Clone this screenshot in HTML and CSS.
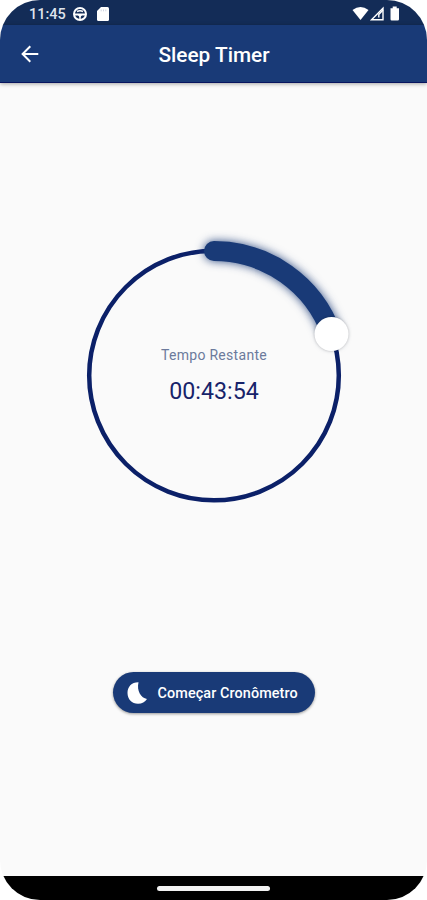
FILE: index.html
```
<!DOCTYPE html>
<html lang="pt">
<head>
  <meta charset="UTF-8">
  <meta name="viewport" content="width=device-width, initial-scale=1.0">
  <title>Sleep Timer</title>
  <link rel="stylesheet" href="styles.css">
</head>
<body>

  <div class="phone">
    <div class="status-bar">
      <span class="clock">11:45</span>
      <svg class="icon-app" width="16" height="16" viewBox="0 0 16 16">
        <circle cx="8" cy="8" r="6" fill="none" stroke="#fff" stroke-width="2"/>
        <path d="M2 8.500h12" stroke="#fff" stroke-width="1.800"/>
        <path d="M5 5.500q3-1.600 6 0M8 9v4.500" fill="none" stroke="#fff" stroke-width="1.500"/>
        <path d="M5 8h6l-3 3.500z" fill="#fff"/>
      </svg>
      <svg class="icon-sd" width="12" height="14" viewBox="0 0 12 14">
        <path d="M4 0h6.500Q12 0 12 1.500v11Q12 14 10.500 14h-9Q0 14 0 12.500V4z" fill="#fff"/>
        <path d="M4.200 2.500v1.800M6.500 2.500v1.800M8.800 2.500v1.800" stroke="#c5ccda" stroke-width=".8"/>
      </svg>
      <svg class="icon-signal" width="50" height="16" viewBox="0 0 50 16">
        <path d="M.5 4Q8.500-2 16.500 4L8.500 14z" fill="#fff"/>
        <path d="M19.500 13.800H31V2.200z" fill="none" stroke="#fff" stroke-width="1.400"/>
        <path d="M26.800 11.500V8.500L31 4" fill="none" stroke="#fff" stroke-width="1.400"/>
        <path d="M38.500 2.200h2.200V.5h4v1.700H47v11q0 1.300-1.300 1.300h-6q-1.200 0-1.200-1.300z" fill="#fff"/>
      </svg>
    </div>

    <header class="app-bar">
      <button class="back" type="button" aria-label="Voltar">
        <svg width="18" height="18" viewBox="0 0 18 18">
          <path d="M17.300 9H2M9.300 1.300L1.600 9l7.700 7.700" fill="none" stroke="#fff" stroke-width="2"/>
        </svg>
      </button>
      <h1>Sleep Timer</h1>
    </header>

    <main>
      <div class="timer">
        <svg class="dial" width="300" height="300" viewBox="0 0 300 300">
          <circle class="track" cx="150" cy="149.500" r="124.800"/>
          <path class="progress" d="M150 25A124.500 124.500 0 0 1 267.500 108"/>
          <circle class="knob" cx="267.500" cy="108" r="17"/>
        </svg>
        <div class="readout">
          <span class="label">Tempo Restante</span>
          <span class="time">00:43:54</span>
        </div>
      </div>

      <button class="start" type="button">
        <svg width="21" height="22" viewBox="0 0 21 22">
          <path d="M11.500.3C4.500.2.500 5 .5 11c0 6.300 4.500 10.700 10.500 10.700 4 0 7-1.600 9-4.700C14 16 9.500 9 11.500.3z" fill="#fff"/>
        </svg>
        <span>Começar Cronômetro</span>
      </button>
    </main>

    <div class="nav-bar">
      <div class="handle"></div>
    </div>
  </div>

</body>
</html>
```

FILE: styles.css
```
body {
  font-family: Roboto, sans-serif;
  background-color: #fff;
  margin: 0;
}

.phone {
  width: 427px;
  height: 900px;
  border-radius: 40px;
  overflow: hidden;
  display: flex;
  flex-direction: column;
  background-color: #fafafa;
}

.status-bar {
  height: 25px;
  box-sizing: border-box;
  padding: 3px 25px 0 29px;
  display: flex;
  align-items: center;
  background-color: #132c57;
}

.clock {
  width: 37px;
  font-size: 14.5px;
  font-weight: 500;
  color: #dfe4ec;
}

.icon-app {
  margin-left: 6px;
}

.icon-sd {
  margin-left: 9px;
}

.icon-signal {
  margin-left: auto;
}

.app-bar {
  height: 58px;
  box-sizing: border-box;
  padding: 0 21px;
  display: grid;
  grid-template-columns: 18px 1fr 18px;
  align-items: center;
  background-color: #193a77;
  border-bottom: 1px solid #08145f;
  box-shadow: 0 1px 4px rgba(0, 0, 0, 0.35);
}

.app-bar h1 {
  margin: 0;
  padding: 2px 0 0 1px;
  font-size: 20.8px;
  font-weight: 500;
  text-align: center;
  color: #fff;
}

.back {
  display: flex;
  padding: 0;
  border: none;
  background: none;
  cursor: pointer;
}

main {
  flex: 1;
  padding-top: 143px;
  display: flex;
  flex-direction: column;
  align-items: center;
}

.timer {
  display: grid;
  place-items: center;
}

.dial,
.readout {
  grid-area: 1 / 1;
}

.track {
  fill: none;
  stroke: #0b2068;
  stroke-width: 4.5;
}

.progress {
  fill: none;
  stroke: #193a77;
  stroke-width: 20;
  stroke-linecap: round;
  filter: drop-shadow(0 0 5px rgba(25, 58, 119, 0.9));
}

.knob {
  fill: #fff;
  filter: drop-shadow(0 0 1.5px rgba(0, 0, 0, 0.25));
}

.readout {
  display: flex;
  flex-direction: column;
  align-items: center;
  gap: 14px;
  padding: 0 0 3px 1px;
}

.label {
  font-size: 14px;
  line-height: 18px;
  letter-spacing: 0.3px;
  color: #6c7a9c;
}

.time {
  font-size: 23.2px;
  line-height: 26px;
  color: #17236a;
}

.start {
  width: 202px;
  height: 41px;
  margin-top: 146px;
  padding: 1px 0 0 14px;
  display: flex;
  align-items: center;
  gap: 10px;
  border: none;
  border-radius: 21px;
  background-color: #193a77;
  box-shadow: 0 1px 3px rgba(0, 0, 0, 0.4);
  font-family: inherit;
  font-size: 14.4px;
  font-weight: 500;
  letter-spacing: 0.1px;
  white-space: nowrap;
  color: #fff;
  cursor: pointer;
}

.nav-bar {
  height: 24px;
  display: flex;
  align-items: center;
  justify-content: center;
  background-color: #000;
}

.handle {
  width: 113px;
  height: 5px;
  border-radius: 3px;
  background-color: #f2f2f2;
}
```
